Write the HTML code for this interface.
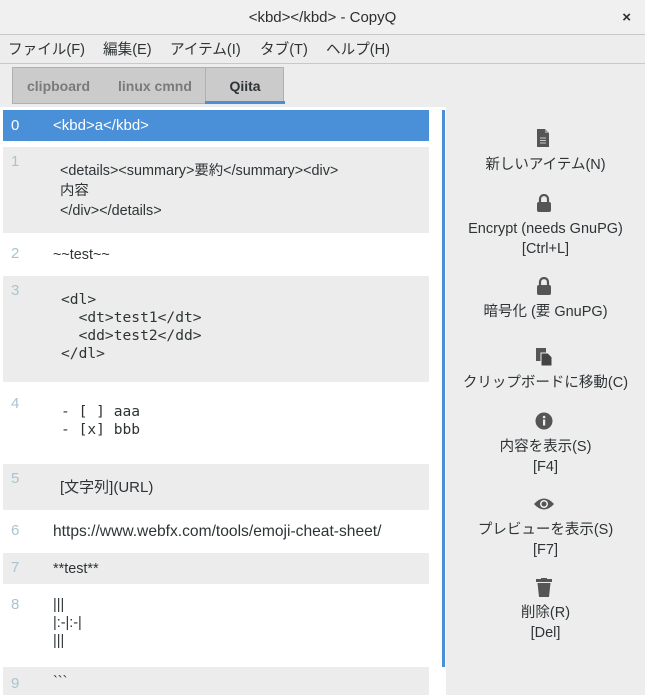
<!DOCTYPE html><html><head><meta charset="utf-8"><style>
*{margin:0;padding:0;box-sizing:border-box}
body{width:645px;height:695px;overflow:hidden;background:#ededed;font-family:"Liberation Sans","Noto Sans CJK JP",sans-serif;font-size:15px;color:#2e3436;position:relative}
.a{position:absolute}
.title{left:0;top:0;width:645px;height:35px;background:#f0f0f0;border-bottom:1px solid #c8c8c8;text-align:center;line-height:35px;font-size:15px;color:#2e2e2e}
.menu{left:0;top:36px;width:645px;height:28px;border-bottom:1px solid #c8c8c8;line-height:28px;font-size:14.6px}
.menu span{position:absolute;top:0}
.tabs{left:12px;top:67px;width:272px;height:37px;background:#cbcbcb;border:1px solid #b0b0b0}
.tab{top:0;height:34px;line-height:36px;font-weight:bold;font-size:14px;color:#7a7a7a;white-space:nowrap}
.list{left:0;top:107px;width:446px;height:588px;background:#fff}
.row{position:absolute;left:3px;width:426px}
.g{background:#ececec}
.n{position:absolute;left:8px;color:#a9c4cf;font-size:15px}
.t{position:absolute;left:50px;font-size:14.4px;line-height:20px;white-space:nowrap}
.m{font-family:"DejaVu Sans Mono",monospace;font-size:14.6px;line-height:18px;left:58px}
.btn{position:absolute;left:446px;width:199px;text-align:center;font-size:14.5px;line-height:20px}
</style></head><body>
<div class="a title">&lt;kbd&gt;&lt;/kbd&gt; - CopyQ<span style="position:absolute;right:14px;top:0;font-weight:bold;font-size:15px">×</span></div>
<div class="a menu"><span style="left:8px">ファイル(F)</span><span style="left:103px">編集(E)</span><span style="left:170px">アイテム(I)</span><span style="left:260px">タブ(T)</span><span style="left:326px">ヘルプ(H)</span></div>
<div class="a tabs">
<div class="a tab" style="left:14px">clipboard</div>
<div class="a tab" style="left:105px">linux cmnd</div>
<div class="a" style="left:192px;top:-1px;width:1px;height:37px;background:#b0b0b0"></div>
<div class="a tab" style="left:193px;width:78px;text-align:center;color:#2e3436;height:32px">Qiita</div>
<div class="a" style="left:192px;top:33px;width:80px;height:3px;background:#4a90d9"></div>
</div>
<div class="a list">
<div class="row" style="top:3px;height:31px;background:#4a90d9;color:#fff"><span class="n" style="color:#fff;top:7px">0</span><span class="t" style="top:6px;font-size:15px">&lt;kbd&gt;a&lt;/kbd&gt;</span></div>
<div class="row g" style="top:40px;height:86px"><span class="n" style="top:6px">1</span><span class="t" style="top:14px;left:57px">&lt;details&gt;&lt;summary&gt;要約&lt;/summary&gt;&lt;div&gt;<br>内容<br>&lt;/div&gt;&lt;/details&gt;</span></div>
<div class="row" style="top:126px;height:43px"><span class="n" style="top:12px">2</span><span class="t" style="top:12px">~~test~~</span></div>
<div class="row g" style="top:169px;height:106px"><span class="n" style="top:6px">3</span><span class="t m" style="top:15px">&lt;dl&gt;<br>&nbsp;&nbsp;&lt;dt&gt;test1&lt;/dt&gt;<br>&nbsp;&nbsp;&lt;dd&gt;test2&lt;/dd&gt;<br>&lt;/dl&gt;</span></div>
<div class="row" style="top:275px;height:82px"><span class="n" style="top:13px">4</span><span class="t m" style="top:21px">- [ ] aaa<br>- [x] bbb</span></div>
<div class="row g" style="top:357px;height:46px"><span class="n" style="top:6px">5</span><span class="t" style="top:14px;left:57px;font-size:15px">[文字列](URL)</span></div>
<div class="row" style="top:403px;height:43px"><span class="n" style="top:12px">6</span><span class="t" style="top:12px;font-size:15.6px">https://www.webfx.com/tools/emoji-cheat-sheet/</span></div>
<div class="row g" style="top:446px;height:31px"><span class="n" style="top:6px">7</span><span class="t" style="top:6px">**test**</span></div>
<div class="row" style="top:477px;height:83px"><span class="n" style="top:12px">8</span><span class="t" style="top:12px;line-height:18px">|||<br>|:-|:-|<br>|||</span></div>
<div class="row g" style="top:560px;height:28px"><span class="n" style="top:8px">9</span><span class="t" style="top:5px">&#96;&#96;&#96;</span></div>
</div>
<div class="a" style="left:442px;top:110px;width:3px;height:557px;background:#4a90d9"></div>
<svg class="a" style="left:536px;top:129px" width="14" height="18" viewBox="0 0 14 18"><path d="M1 0h8l4 4v14H1z" fill="#555"/><path d="M9 0v4h4" fill="#999"/><path d="M4 9h6M4 11.5h6M4 14h6" stroke="#ccc" stroke-width="1"/></svg>
<div class="btn" style="top:155px">新しいアイテム(N)</div>
<svg class="a" style="left:536px;top:194px" width="16" height="18" viewBox="0 0 16 18"><path d="M4 8V5a4 4 0 0 1 8 0v3" fill="none" stroke="#555" stroke-width="2.2"/><rect x="1" y="8" width="14" height="10" rx="2" fill="#555"/></svg>
<div class="btn" style="top:219px">Encrypt (needs GnuPG)<br>[Ctrl+L]</div>
<svg class="a" style="left:536px;top:277px" width="16" height="18" viewBox="0 0 16 18"><path d="M4 8V5a4 4 0 0 1 8 0v3" fill="none" stroke="#555" stroke-width="2.2"/><rect x="1" y="8" width="14" height="10" rx="2" fill="#555"/></svg>
<div class="btn" style="top:302px">暗号化 (要 GnuPG)</div>
<svg class="a" style="left:535px;top:347px" width="18" height="19" viewBox="0 0 18 19"><rect x="1" y="1" width="10" height="13" fill="#555"/><path d="M6 6h7l4 4v9H6z" fill="#444" stroke="#eee" stroke-width="1"/></svg>
<div class="btn" style="top:373px">クリップボードに移動(C)</div>
<svg class="a" style="left:535px;top:412px" width="18" height="18" viewBox="0 0 18 18"><circle cx="9" cy="9" r="8.5" fill="#555"/><rect x="8" y="7.5" width="2.2" height="6" fill="#eee"/><circle cx="9.1" cy="5" r="1.3" fill="#eee"/></svg>
<div class="btn" style="top:437px">内容を表示(S)<br>[F4]</div>
<svg class="a" style="left:533px;top:497px" width="22" height="14" viewBox="0 0 22 14"><path d="M1 7Q11 -4 21 7Q11 18 1 7z" fill="#555"/><circle cx="11" cy="7" r="4" fill="#eee"/><circle cx="11" cy="7" r="2.5" fill="#555"/></svg>
<div class="btn" style="top:520px">プレビューを表示(S)<br>[F7]</div>
<svg class="a" style="left:536px;top:578px" width="16" height="19" viewBox="0 0 16 19"><rect x="0" y="1" width="16" height="3" fill="#555"/><rect x="5" y="0" width="6" height="2" fill="#555"/><path d="M1.5 5h13l-1.5 14H3z" fill="#555"/></svg>
<div class="btn" style="top:603px">削除(R)<br>[Del]</div>
</body></html>
